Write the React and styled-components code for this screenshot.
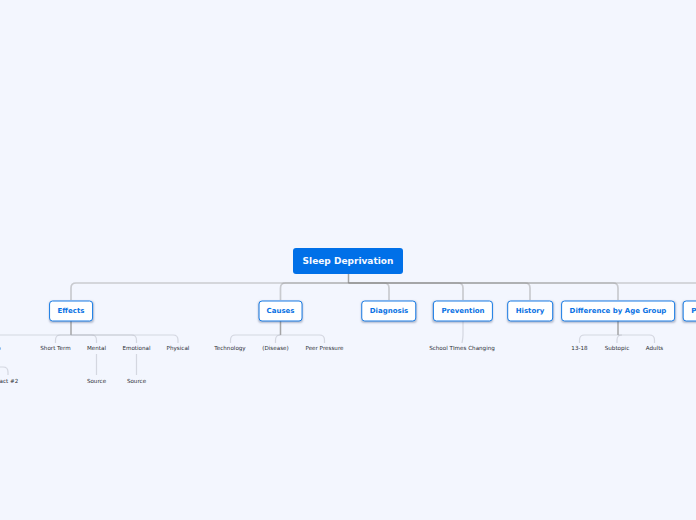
import React from 'react';
import styled, { createGlobalStyle } from 'styled-components';

const Global = createGlobalStyle`
  html, body { margin: 0; padding: 0; background: #f3f6fe; overflow: hidden; }
  #root { width: 696px; height: 520px; }
`;

const Canvas = styled.main`
  position: relative;
  width: 696px;
  height: 520px;
  overflow: hidden;
  background: #f3f6fe;
  font-family: "DejaVu Sans", sans-serif;
`;

const Links = styled.svg`
  position: absolute;
  inset: 0;
  width: 696px;
  height: 520px;
`;

const Branch = styled.path`
  fill: none;
  stroke: #8f8f90;
  stroke-opacity: 0.42;
  stroke-width: 1.7;
`;

const Twig = styled.path`
  fill: none;
  stroke: #a9abb8;
  stroke-opacity: 0.42;
  stroke-width: 1.2;
`;

const Stem = styled.path`
  fill: none;
  stroke: #9c9c9c;
  stroke-opacity: 0.9;
  stroke-width: 1.5;
`;

const RootNode = styled.div`
  position: absolute;
  left: ${p => p.$x}px;
  top: ${p => p.$y}px;
  transform: translate(-50%, -50%);
  box-sizing: border-box;
  height: 26px;
  width: 110px;
  display: flex;
  align-items: center;
  justify-content: center;
  background: #0070e8;
  border-radius: 3px;
  color: #f6f9ff;
  font-size: 9px;
  font-weight: 700;
  white-space: nowrap;
`;

const TopicNode = styled.div`
  position: absolute;
  left: ${p => p.$x}px;
  top: ${p => p.$y}px;
  transform: translate(-50%, -50%);
  box-sizing: border-box;
  height: 21px;
  padding: 0 7.5px;
  display: flex;
  align-items: center;
  background: #ffffff;
  border: 1.5px solid #1a7de6;
  border-radius: 3.5px;
  box-shadow: 0 1px 2px rgba(60, 80, 120, 0.35);
  color: #0a72e4;
  font-size: 7px;
  font-weight: 700;
  white-space: nowrap;
`;

const Leaf = styled.div`
  position: absolute;
  left: ${p => p.$x}px;
  top: ${p => p.$y}px;
  transform: translate(-50%, -50%);
  color: #2a2c33;
  font-size: 5.6px;
  line-height: 8px;
  white-space: nowrap;
`;

const rootX = 348.5;
const trunkY = 283;

const topics = [
  { label: 'Effects', x: 71 },
  { label: 'Causes', x: 280.5 },
  { label: 'Diagnosis', x: 389 },
  { label: 'Prevention', x: 463 },
  { label: 'History', x: 530 },
  { label: 'Difference by Age Group', x: 618 },
  { label: 'Prevalence', x: 713, bare: true },
];

const leaves = [
  { label: 'Info', x: -4.5, y: 348 },
  { label: 'Short Term', x: 55.5, y: 348 },
  { label: 'Mental', x: 96.5, y: 348 },
  { label: 'Emotional', x: 136.5, y: 348 },
  { label: 'Physical', x: 178, y: 348 },
  { label: 'Fact #2', x: 7.5, y: 381 },
  { label: 'Source', x: 96.5, y: 381 },
  { label: 'Source', x: 136.5, y: 381 },
  { label: 'Technology', x: 230, y: 348 },
  { label: '(Disease)', x: 275.5, y: 348 },
  { label: 'Peer Pressure', x: 324.5, y: 348 },
  { label: 'School TImes Changing', x: 462, y: 348 },
  { label: '13-18', x: 579.5, y: 348 },
  { label: 'Subtopic', x: 617, y: 348 },
  { label: 'Adults', x: 654.5, y: 348 },
];

const branchPath = x => {
  const dir = x < rootX ? -1 : 1;
  const r = 5;
  return `M${rootX} ${trunkY} H${x - dir * r} Q${x} ${trunkY} ${x} ${trunkY + r} V300`;
};

const twigs = [
  [71, 335, -4.5],
  [71, 335, 55.5],
  [71, 335, 96.5],
  [71, 335, 136.5],
  [71, 335, 178],
  [280.5, 335, 230.5],
  [280.5, 335, 275.5],
  [280.5, 335, 324.5],
  [618, 335, 579.5],
  [618, 335, 617],
  [618, 335, 654.5],
];

const twigPath = ([from, y, x]) => {
  const dir = x < from ? -1 : 1;
  const r = 5;
  return `M${from} ${y} H${x - dir * r} Q${x} ${y} ${x} ${y + r} V343`;
};

export default function App() {
  return (
    <Canvas>
      <Global />
      <Links viewBox="0 0 696 520">
        <Stem d={`M${rootX} 274 V${trunkY}`} />
        {topics.map(t => <Branch key={t.label} d={branchPath(t.bare ? 730 : t.x)} />)}
        <Stem d="M71 321 V335 M280.5 321 V335 M618 321 V335" />
        {twigs.map(t => <Twig key={t.join()} d={twigPath(t)} />)}
        <Twig d="M463 321 V335 Q463 338 462 343" />
        <Twig d="M96.5 354 V375 M136.5 354 V375" />
        <Twig d="M-5 367 H3 Q8 367 8 372 V375" />
      </Links>
      <RootNode $x={348} $y={261}>Sleep Deprivation</RootNode>
      {topics.map(t => <TopicNode key={t.label} $x={t.x} $y={310.5}>{t.label}</TopicNode>)}
      {leaves.map(l => <Leaf key={l.label + l.x} $x={l.x} $y={l.y}>{l.label}</Leaf>)}
    </Canvas>
  );
}
